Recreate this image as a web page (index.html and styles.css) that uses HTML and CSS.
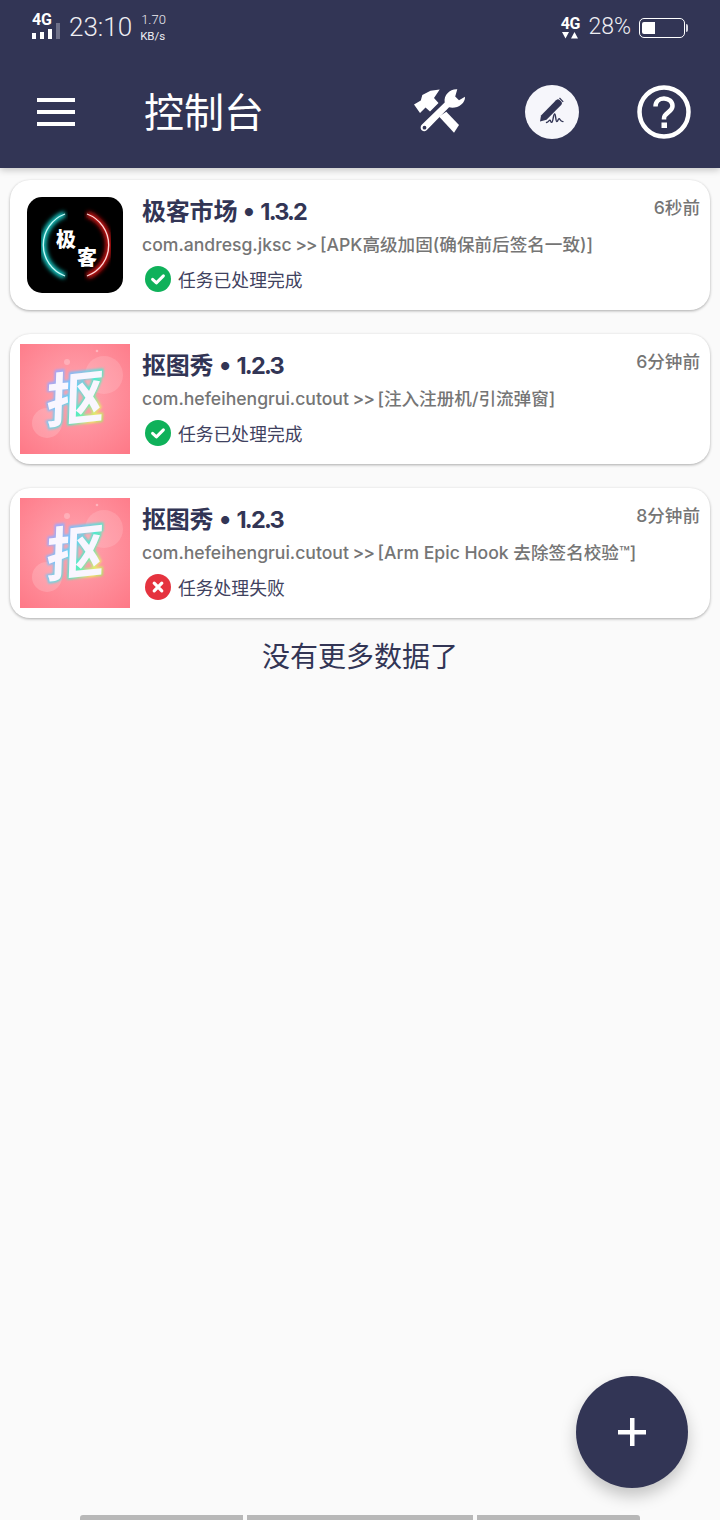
FILE: index.html
```html
<!DOCTYPE html>
<html lang="zh-CN">
<head>
<meta charset="utf-8">
<title>控制台</title>
<link rel="stylesheet" href="styles.css">
</head>
<body>
<svg class="defs" width="0" height="0" aria-hidden="true">
  <defs>
    <filter id="soft"><feGaussianBlur stdDeviation="2.2"/></filter>
    <filter id="soft-sm"><feGaussianBlur stdDeviation=".9"/></filter>
    <radialGradient id="pink" cx="50%" cy="45%" r="72%">
      <stop offset="0" stop-color="#ffa6b1"/>
      <stop offset="1" stop-color="#fe7a88"/>
    </radialGradient>
    <linearGradient id="rainbow" x1="0" y1="0" x2="1" y2="1">
      <stop offset="0" stop-color="#c58bff"/>
      <stop offset=".4" stop-color="#6fc8ff"/>
      <stop offset=".65" stop-color="#45f5c0"/>
      <stop offset=".82" stop-color="#f4f25c"/>
      <stop offset="1" stop-color="#50ee6c"/>
    </linearGradient>
    <symbol id="thumb-cutout" viewBox="0 0 110 110">
      <rect width="110" height="110" fill="url(#pink)"/>
      <circle cx="84" cy="31" r="19" fill="#fff" opacity=".14"/>
      <circle cx="27" cy="79" r="15" fill="#fff" opacity=".17"/>
      <circle cx="47" cy="18" r="3" fill="#fff" opacity=".25"/>
      <circle cx="77" cy="7" r="1.300" fill="#fff" opacity=".35"/>
      <g transform="translate(55 55) rotate(-6) skewX(-8)">
        <text class="cut-glow" x="0" y="21" fill="none" stroke="url(#rainbow)" stroke-width="3" filter="url(#soft-sm)">抠</text>
        <text class="cut-glyph" x="0" y="21" fill="#f9f6ff">抠</text>
      </g>
    </symbol>
    <symbol id="ok" viewBox="0 0 26 26">
      <circle cx="13" cy="13" r="13" fill="#0fb15a"/>
      <path d="M7.600 13.300l3.800 3.600 7-7" fill="none" stroke="#fff" stroke-width="3" stroke-linecap="round" stroke-linejoin="round"/>
    </symbol>
    <symbol id="fail" viewBox="0 0 26 26">
      <circle cx="13" cy="13" r="13" fill="#e5333f"/>
      <path d="M9.200 9.200l7.600 7.600M16.800 9.200l-7.600 7.600" fill="none" stroke="#fff" stroke-width="3.200" stroke-linecap="round"/>
    </symbol>
  </defs>
</svg>

<div class="screen">
  <header class="appbar">
    <div class="status">
      <div class="status-left">
        <div class="net">
          <span class="net-label">4G</span>
          <div class="signal"><i class="s1"></i><i class="s2"></i><i class="s3"></i><i class="s4"></i></div>
        </div>
        <span class="clock">23:10</span>
        <div class="speed"><span>1.70</span><span class="speed-unit">KB/s</span></div>
      </div>
      <div class="status-right">
        <div class="net net-right">
          <span class="net-label">4G</span>
          <svg class="updown" width="18" height="8" viewBox="0 0 18 8"><path d="M1 1h7L4.500 7.500zM10 7.500h7L13.500 1z" fill="#fff"/></svg>
        </div>
        <span class="battery-pct">28%</span>
        <div class="battery"><div class="battery-fill"></div></div>
        <div class="battery-tip"></div>
      </div>
    </div>
    <div class="toolbar">
      <div class="burger"><i></i><i></i><i></i></div>
      <h1 class="title">控制台</h1>
      <svg class="tool" width="54" height="48" viewBox="0 0 54 48">
        <path d="M1 16.500L7 25l5.500-5.500 4.500 4 8.500-8.500-4.500-5L26.700 1.500 17.500 2.800 9.300 7l-1.500 5.500z" fill="#fff"/>
        <path d="M26 28.500L41 44.700 46 37 33.300 23.700z" fill="#fff"/>
        <path fill-rule="evenodd" d="M44.300 1.300C37 .8 30.500 7 31.700 14.500L9 36.500c-3.600 3.600.8 9 4.600 5.800l22.500-23c7.500 2 16.400-3.500 15.900-10.600l-6 3.500-3.800-3.800zM11.500 37.800a1.900 1.900 0 1 1 0 3.800 1.900 1.900 0 0 1 0-3.800z" fill="#fff"/>
      </svg>
      <svg class="tool" width="54" height="54" viewBox="0 0 54 54">
        <circle cx="27" cy="27" r="27" fill="#f6f6fb"/>
        <path d="M15 36.500l1-6L31 15.300c1.500-1.300 2.500-1.300 3.600-.3l1.600 1.600c1 1.200 1 2.200 0 3.300L21.500 34.800z" fill="#323555"/>
        <path d="M34.500 13l3.700 3.800" fill="none" stroke="#323555" stroke-width="1.200"/>
        <path d="M21.500 37.500c2.200-.2 2.500-2.700 3.500-2.400 1 .3.500 2.500 1.700 2.300 1.500-.3 1.600-8.400 2.900-8.400s.9 7.600 2.300 7.600c1.200 0 1.100-3 2.200-3 1 0 .9 3.100 3.900 3" fill="none" stroke="#323555" stroke-width="1.400" stroke-linecap="round"/>
      </svg>
      <svg class="tool" width="54" height="54" viewBox="0 0 54 54">
        <circle cx="27" cy="27" r="24.500" fill="none" stroke="#fff" stroke-width="4.500"/>
        <path d="M18.500 21.500c0-5 3.800-8 8.500-8s8.500 3 8.500 7.500c0 6.300-8.500 6.500-8.500 12.500v1" fill="none" stroke="#fff" stroke-width="4.500"/>
        <rect x="24.500" y="37.500" width="5.500" height="5.500" fill="#fff"/>
      </svg>
    </div>
  </header>

  <main class="list">
    <article class="card">
      <div class="thumb">
        <svg width="96" height="96" viewBox="0 0 96 96">
          <rect width="96" height="96" rx="15" fill="#000"/>
          <path d="M38 17A33 33 0 0 0 38 79" fill="none" stroke="#16c9c4" stroke-width="6" filter="url(#soft)"/>
          <path d="M60 17A33 33 0 0 1 60 79" fill="none" stroke="#d31717" stroke-width="6" filter="url(#soft)"/>
          <path d="M38 17A33 33 0 0 0 38 79" fill="none" stroke="#c6fbf8" stroke-width="1.300"/>
          <path d="M60 17A33 33 0 0 1 60 79" fill="none" stroke="#ffd9d9" stroke-width="1.300"/>
          <text class="thumb-word" x="39" y="50">极</text>
          <text class="thumb-word" x="60" y="68">客</text>
        </svg>
      </div>
      <div class="body">
        <div class="head">
          <h2 class="name">极客市场 <span class="dot">•</span> <span class="ver">1.3.2</span></h2>
          <span class="time">6秒前</span>
        </div>
        <p class="detail">com.andresg.jksc<span class="arrow"> &gt;&gt; </span>[APK高级加固(确保前后签名一致)]</p>
        <div class="state">
          <svg class="state-icon" width="26" height="26"><use href="#ok"/></svg>
          <span>任务已处理完成</span>
        </div>
      </div>
    </article>

    <article class="card">
      <div class="thumb">
        <svg width="110" height="110"><use href="#thumb-cutout"/></svg>
      </div>
      <div class="body">
        <div class="head">
          <h2 class="name">抠图秀 <span class="dot">•</span> <span class="ver">1.2.3</span></h2>
          <span class="time">6分钟前</span>
        </div>
        <p class="detail">com.hefeihengrui.cutout<span class="arrow"> &gt;&gt; </span>[注入注册机/引流弹窗]</p>
        <div class="state">
          <svg class="state-icon" width="26" height="26"><use href="#ok"/></svg>
          <span>任务已处理完成</span>
        </div>
      </div>
    </article>

    <article class="card">
      <div class="thumb">
        <svg width="110" height="110"><use href="#thumb-cutout"/></svg>
      </div>
      <div class="body">
        <div class="head">
          <h2 class="name">抠图秀 <span class="dot">•</span> <span class="ver">1.2.3</span></h2>
          <span class="time">8分钟前</span>
        </div>
        <p class="detail">com.hefeihengrui.cutout<span class="arrow"> &gt;&gt; </span>[Arm Epic Hook 去除签名校验™]</p>
        <div class="state">
          <svg class="state-icon" width="26" height="26"><use href="#fail"/></svg>
          <span>任务处理失败</span>
        </div>
      </div>
    </article>
  </main>

  <p class="end">没有更多数据了</p>
  <div class="spacer"></div>

  <button class="fab" aria-label="add">
    <svg width="30" height="30" viewBox="0 0 30 30"><path d="M13 1h4.500v12H29v4.500H17.500V29H13V17.500H1V13h12z" fill="#fff"/></svg>
  </button>

  <div class="navbar"><i class="nav-a"></i><i class="nav-b"></i><i class="nav-c"></i></div>
</div>
</body>
</html>
```
FILE: styles.css
```css
* { box-sizing: border-box; }
html, body { margin: 0; padding: 0; }
body {
  background: #fafafa;
  font-family: "Inter", "Noto Sans CJK SC", sans-serif;
  color: #323555;
}
.defs { display: block; height: 0; }
.screen {
  position: relative;
  width: 720px;
  height: 1520px;
  display: flex;
  flex-direction: column;
  overflow: hidden;
}

/* app bar */
.appbar {
  position: relative;
  z-index: 2;
  height: 168px;
  background: #323555;
  box-shadow: 0 2px 7px rgba(0, 0, 0, .22);
  color: #fff;
}
.status {
  height: 56px;
  padding: 12px 32px 0 32px;
  display: flex;
  justify-content: space-between;
  align-items: flex-start;
}
.status-left, .status-right { display: flex; align-items: flex-start; }
.net { display: flex; flex-direction: column; width: 28px; }
.net-label {
  font: 700 16px/15px "Roboto", sans-serif;
  letter-spacing: -.3px;
}
.signal { display: flex; align-items: flex-end; gap: 4px; margin-top: -2px; height: 14px; }
.signal i { display: block; width: 4px; background: #fff; }
.s1 { height: 6px; }
.s2 { height: 7px; }
.s3 { height: 10px; }
.s4 { height: 16px; background: #6e7088 !important; }
.clock {
  margin-left: 9px;
  font: 300 26px/30px "Roboto", sans-serif;
  color: #eeeef3;
}
.speed {
  margin-left: 9px;
  padding-top: 1px;
  display: flex;
  flex-direction: column;
  font: 300 13px/14px "Roboto", sans-serif;
  color: #eeeef3;
}
.speed-unit { font-size: 11.500px; font-weight: 400; margin-top: 2px; margin-left: -1px; }
.net-right { width: 18px; align-items: center; margin-top: 4px; }
.updown { display: block; margin-top: 0; }
.battery-pct {
  margin-left: 9px;
  font: 300 23px/30px "Roboto", sans-serif;
  color: #eeeef3;
}
.battery {
  margin: 6px 0 0 8px;
  width: 46px;
  height: 20px;
  border: 1px solid #fff;
  border-radius: 5px;
  padding: 3px 2px;
}
.battery-fill { width: 13px; height: 100%; background: #fff; border-radius: 2px 0 0 2px; }
.battery-tip {
  margin: 12px 0 0 1px;
  width: 2px;
  height: 8px;
  background: #d8d8e0;
  border-radius: 0 2px 2px 0;
}
.toolbar {
  height: 112px;
  padding: 0 29px 0 37px;
  display: flex;
  align-items: center;
  gap: 58px;
}
.burger { width: 38px; display: flex; flex-direction: column; gap: 8px; }
.burger i { display: block; height: 4px; background: #fff; }
.title {
  flex: 1;
  margin: -4px 0 0 11px;
  font: 400 40px/50px "Noto Sans CJK SC", sans-serif;
  color: #fff;
}
.tool { display: block; flex: none; }

/* list */
.list {
  padding: 12px 10px 0;
  display: flex;
  flex-direction: column;
  gap: 24px;
}
.card {
  height: 130px;
  padding: 10px;
  display: flex;
  gap: 12px;
  background: #fff;
  border-radius: 20px;
  box-shadow: 0 1px 3px rgba(0, 0, 0, .32);
}
.thumb {
  flex: none;
  width: 110px;
  height: 110px;
  display: flex;
  align-items: center;
  justify-content: center;
}
.thumb svg { display: block; }
.thumb-word {
  font: 900 20px "Noto Sans CJK SC", sans-serif;
  fill: #fff;
  text-anchor: middle;
}
.cut-glow, .cut-glyph {
  font: 700 58px "Noto Sans CJK SC", sans-serif;
  text-anchor: middle;
}
.body { flex: 1; min-width: 0; padding-top: 5px; }
.head { display: flex; justify-content: space-between; align-items: flex-start; }
.name {
  margin: 0;
  font-size: 24px;
  font-weight: 700;
  line-height: 34px;
  letter-spacing: -.2px;
  color: #323555;
}
.dot { font-size: 26px; line-height: 1; }
.ver { font-size: 23.500px; letter-spacing: -1.800px; }
.time {
  margin-top: -4px;
  font-size: 17.600px;
  font-weight: 500;
  line-height: 34px;
  color: #757575;
}
.detail {
  margin: -1px 0 0;
  font-size: 17.600px;
  font-weight: 500;
  line-height: 34px;
  white-space: nowrap;
  color: #757575;
}
.arrow { letter-spacing: -1.100px; }
.state {
  margin-top: 0;
  padding-left: 3px;
  height: 34px;
  display: flex;
  align-items: center;
  gap: 7px;
  font-size: 17.800px;
  color: #3f4260;
}
.state-icon { display: block; flex: none; }

.end {
  margin: 21px 0 0;
  text-align: center;
  font-size: 28px;
  line-height: 36px;
  color: #323555;
}
.spacer { flex: 1; }

.fab {
  position: absolute;
  right: 32px;
  bottom: 32px;
  width: 112px;
  height: 112px;
  padding: 0;
  border: 0;
  border-radius: 50%;
  background: #323555;
  box-shadow: 0 8px 16px rgba(0, 0, 0, .22);
  display: flex;
  align-items: center;
  justify-content: center;
}
.fab svg { display: block; }

.navbar {
  height: 5px;
  display: flex;
  justify-content: center;
  gap: 4px;
}
.navbar i { display: block; height: 5px; background: #b8b8b8; }
.nav-a { width: 163px; border-radius: 3px 0 0 0; }
.nav-b { width: 226px; }
.nav-c { width: 163px; border-radius: 0 3px 0 0; }
```
